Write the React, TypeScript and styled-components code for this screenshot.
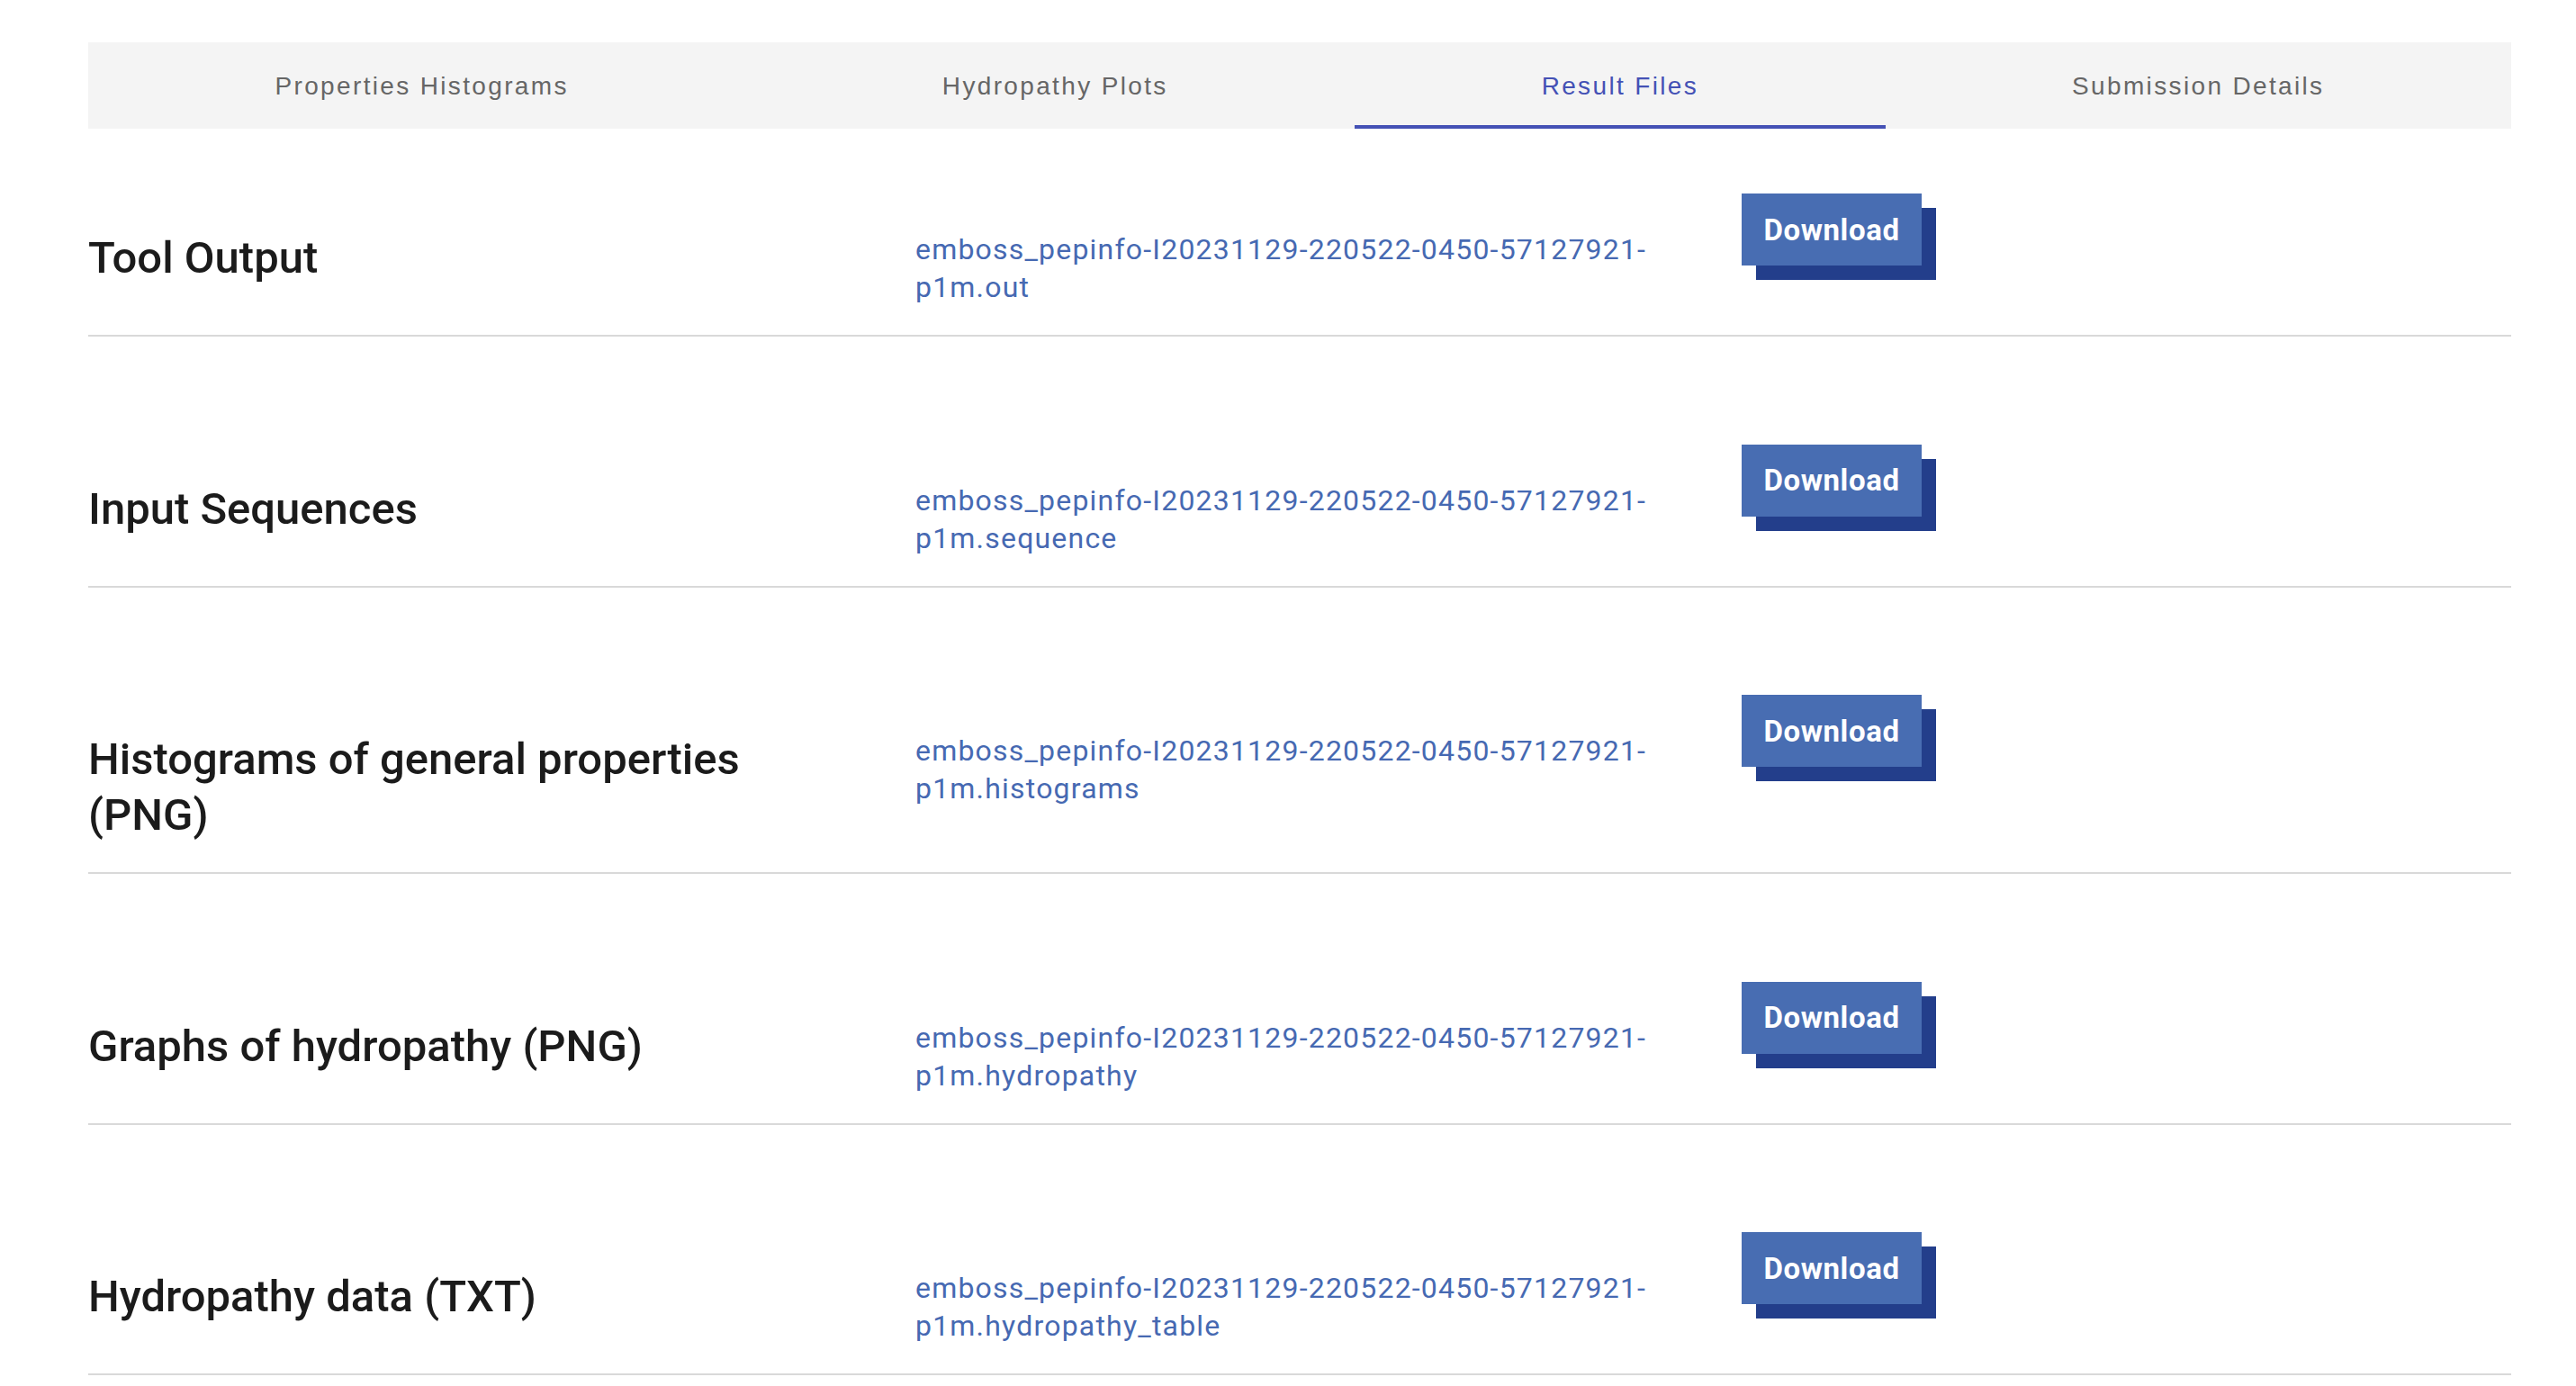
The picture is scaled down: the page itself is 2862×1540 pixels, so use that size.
import React from "react";
import styled, { createGlobalStyle } from "styled-components";

const GlobalStyle = createGlobalStyle`
  html, body {
    margin: 0;
    padding: 0;
    background: #ffffff;
  }
  body {
    font-family: Roboto, "Noto Sans", sans-serif;
  }
`;

const Page = styled.div`
  padding: 47px 72px 0 98px;
`;

const TabBar = styled.nav`
  display: flex;
  height: 96px;
  background: #f4f4f4;
`;

const Tab = styled.button<{ $active?: boolean }>`
  flex: 1 1 auto;
  display: flex;
  align-items: center;
  justify-content: center;
  border: 0;
  margin: 0;
  padding: 2px 0 0 0;
  background: transparent;
  font-family: "Liberation Sans", Arial, sans-serif;
  font-size: 28px;
  letter-spacing: 2.35px;
  color: ${(p) => (p.$active ? "#4451b5" : "#666666")};
  box-shadow: ${(p) => (p.$active ? "inset 0 -4px 0 #4451b5" : "none")};
  cursor: pointer;
  white-space: nowrap;
`;

const List = styled.div`
  display: flex;
  flex-direction: column;
`;

const Row = styled.div`
  display: grid;
  grid-template-columns: 919px 918px 1fr;
  align-items: start;
  padding: 72px 0 32px 0;
  border-bottom: 2px solid #d9d9d9;

  & + & {
    margin-top: 47.6px;
  }
`;

const Heading = styled.h3`
  margin: 41px 0 0 0;
  padding-right: 90px;
  font-family: Roboto, "Noto Sans", sans-serif;
  font-weight: 500;
  font-size: 49px;
  line-height: 62px;
  color: #1b1b1b;
`;

const FileLink = styled.a`
  display: block;
  margin-top: 41px;
  padding-right: 40px;
  font-family: Roboto, "Noto Sans", sans-serif;
  font-size: 32px;
  line-height: 42px;
  letter-spacing: 1.2px;
  color: #4669b2;
  text-decoration: none;
`;

const ButtonCell = styled.div`
  display: flex;
`;

const DownloadButton = styled.button`
  width: 200px;
  height: 80px;
  border: 0;
  padding: 0;
  background: #486db2;
  box-shadow: 16px 16px 0 #233e8b;
  color: #ffffff;
  font-family: Roboto, "Noto Sans", sans-serif;
  font-weight: 700;
  font-size: 33px;
  letter-spacing: 0.6px;
  cursor: pointer;
`;

const PREFIX = "emboss_pepinfo-I20231129-220522-0450-57127921-";

const rows = [
  { title: "Tool Output", ext: "p1m.out" },
  { title: "Input Sequences", ext: "p1m.sequence" },
  { title: "Histograms of general properties (PNG)", ext: "p1m.histograms" },
  { title: "Graphs of hydropathy (PNG)", ext: "p1m.hydropathy" },
  { title: "Hydropathy data (TXT)", ext: "p1m.hydropathy_table" },
];

const tabs = [
  "Properties Histograms",
  "Hydropathy Plots",
  "Result Files",
  "Submission Details",
];

export default function App() {
  return (
    <>
      <GlobalStyle />
      <Page>
        <TabBar>
          {tabs.map((t) => (
            <Tab key={t} $active={t === "Result Files"}>
              {t}
            </Tab>
          ))}
        </TabBar>
        <List>
          {rows.map((r) => (
            <Row key={r.ext}>
              <Heading>{r.title}</Heading>
              <FileLink href="#">
                {PREFIX}
                {r.ext}
              </FileLink>
              <ButtonCell>
                <DownloadButton>Download</DownloadButton>
              </ButtonCell>
            </Row>
          ))}
        </List>
      </Page>
    </>
  );
}
